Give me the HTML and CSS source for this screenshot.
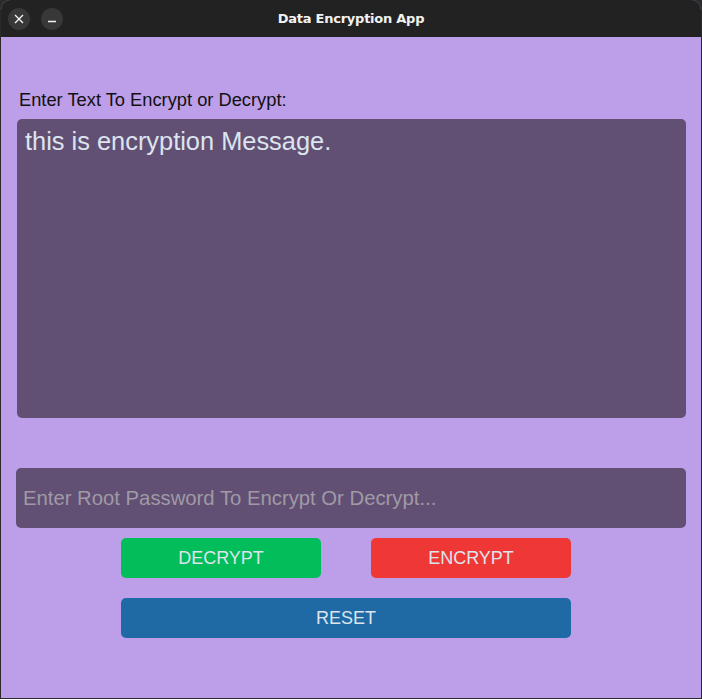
FILE: index.html
```html
<!DOCTYPE html>
<html>
<head>
<meta charset="utf-8">
<link rel="stylesheet" href="styles.css">
</head>
<body>
<div class="window">
  <div class="titlebar">
    <div class="controls">
      <span class="ctl">
        <svg width="10" height="10" viewBox="0 0 10 10"><path d="M1 1 L9 9 M9 1 L1 9" stroke="#f2f2f2" stroke-width="1.4" fill="none"/></svg>
      </span>
      <span class="ctl">
        <svg width="10" height="10" viewBox="0 0 10 10"><path d="M1 7.5 H9" stroke="#f2f2f2" stroke-width="1.4" fill="none"/></svg>
      </span>
    </div>
    <div class="title">Data Encryption App</div>
  </div>
  <div class="content">
    <div class="label">Enter Text To Encrypt or Decrypt:</div>
    <div class="textbox">this is encryption Message.</div>
    <div class="entry">Enter Root Password To Encrypt Or Decrypt...</div>
    <div class="btnrow">
      <div class="btn green">DECRYPT</div>
      <div class="btn red">ENCRYPT</div>
    </div>
    <div class="btnrow">
      <div class="btn blue wide">RESET</div>
    </div>
  </div>
</div>
</body>
</html>
```
FILE: styles.css
```css
html, body {
  margin: 0;
  padding: 0;
  background: #2b2b2b;
}
.window {
  width: 702px;
  height: 699px;
  box-sizing: border-box;
  background: #bd9ee8;
  border: 1px solid #2a2a2a;
  border-top: none;
  border-radius: 10px 10px 0 0;
  overflow: hidden;
  display: flex;
  flex-direction: column;
}
.titlebar {
  height: 37px;
  background: #222222;
  position: relative;
  display: flex;
  align-items: center;
  justify-content: center;
  flex-shrink: 0;
}
.controls {
  position: absolute;
  left: 7px;
  top: 8px;
  display: flex;
  gap: 11px;
}
.ctl {
  width: 22px;
  height: 22px;
  border-radius: 50%;
  background: #383838;
  display: flex;
  align-items: center;
  justify-content: center;
}
.title {
  color: #f2f2f2;
  font-family: "DejaVu Sans", sans-serif;
  font-weight: bold;
  font-size: 13px;
  letter-spacing: -0.25px;
}
.content {
  display: flex;
  flex-direction: column;
  padding: 0 15px 0 15px;
}
.label {
  font-family: "Liberation Sans", Arial, sans-serif;
  font-size: 18.3px;
  color: #111111;
  margin: 53px 0 0 3px;
  line-height: 20px;
}
.textbox {
  margin: 9px 0 0 1px;
  height: 299px;
  background: #625074;
  border-radius: 5px;
  color: #dce4ee;
  font-family: "Liberation Sans", Arial, sans-serif;
  font-size: 25.4px;
  padding: 8px 8px;
  box-sizing: border-box;
  line-height: 28px;
}
.entry {
  margin-top: 50px;
  height: 60px;
  background: #625074;
  border-radius: 5px;
  color: #9f9aa6;
  font-family: "Liberation Sans", Arial, sans-serif;
  font-size: 20.3px;
  display: flex;
  align-items: center;
  padding-left: 7px;
}
.btnrow {
  display: flex;
  gap: 50px;
  margin: 10px 0 0 105px;
}
.btnrow + .btnrow {
  margin-top: 20px;
}
.btn {
  width: 200px;
  height: 40px;
  border-radius: 5px;
  display: flex;
  align-items: center;
  justify-content: center;
  color: #dce4ee;
  font-family: "Liberation Sans", Arial, sans-serif;
  font-size: 18px;
}
.green { background: #02be5a; }
.red { background: #ef3835; }
.blue { background: #1f6aa5; }
.wide { width: 450px; }
```
